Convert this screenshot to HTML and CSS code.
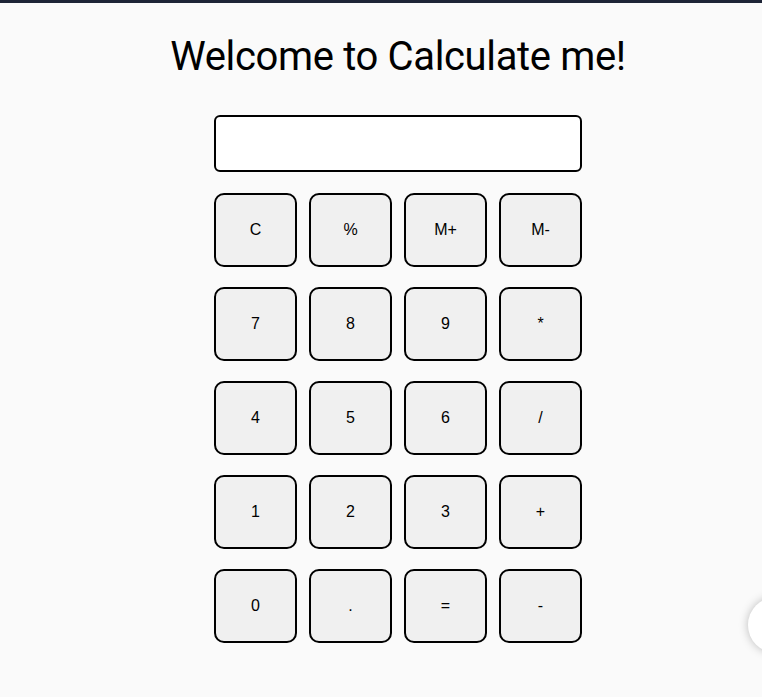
FILE: index.html
```html
<!DOCTYPE html>
<html lang="en">
<head>
<meta charset="utf-8">
<title>Calculate me</title>
<link rel="stylesheet" href="styles.css">
</head>
<body>
<div class="topbar"></div>
<main class="page">
  <h1 class="title">Welcome to Calculate me!</h1>
  <div class="calc">
    <div class="display"></div>
    <div class="keys">
      <button class="key">C</button>
      <button class="key">%</button>
      <button class="key">M+</button>
      <button class="key">M-</button>
      <button class="key">7</button>
      <button class="key">8</button>
      <button class="key">9</button>
      <button class="key">*</button>
      <button class="key">4</button>
      <button class="key">5</button>
      <button class="key">6</button>
      <button class="key">/</button>
      <button class="key">1</button>
      <button class="key">2</button>
      <button class="key">3</button>
      <button class="key">+</button>
      <button class="key">0</button>
      <button class="key">.</button>
      <button class="key">=</button>
      <button class="key">-</button>
    </div>
  </div>
</main>
<div class="fab"></div>
</body>
</html>
```
FILE: styles.css
```css
html, body {
  margin: 0;
  padding: 0;
  background: #fafafa;
  overflow: hidden;
}
body {
  height: 697px;
}
.topbar {
  height: 3px;
  background: #1d2436;
}
.page {
  display: flex;
  flex-direction: column;
  align-items: center;
  padding-left: 34px;
}
.title {
  font-family: Roboto, "Liberation Sans", sans-serif;
  font-weight: 400;
  font-size: 40px;
  line-height: 47px;
  letter-spacing: -0.35px;
  color: #000;
  margin: 30px 0 35px 0;
  white-space: nowrap;
}
.calc {
  display: flex;
  flex-direction: column;
  gap: 21px;
  width: 368px;
}
.display {
  box-sizing: border-box;
  height: 57px;
  background: #fff;
  border: 2px solid #000;
  border-radius: 6px;
}
.keys {
  display: grid;
  grid-template-columns: repeat(4, 83px);
  grid-auto-rows: 74px;
  column-gap: 12px;
  row-gap: 20px;
}
.key {
  box-sizing: border-box;
  margin: 0;
  padding: 0;
  background: #f0f0f0;
  border: 2px solid #000;
  border-radius: 10px;
  font-family: "Liberation Sans", Arial, sans-serif;
  font-size: 16px;
  color: #000;
}
.fab {
  position: fixed;
  left: 748px;
  top: 597px;
  width: 56px;
  height: 56px;
  border-radius: 50%;
  background: #fff;
  box-shadow: 0 0 10px rgba(0, 0, 0, 0.25);
}
```
